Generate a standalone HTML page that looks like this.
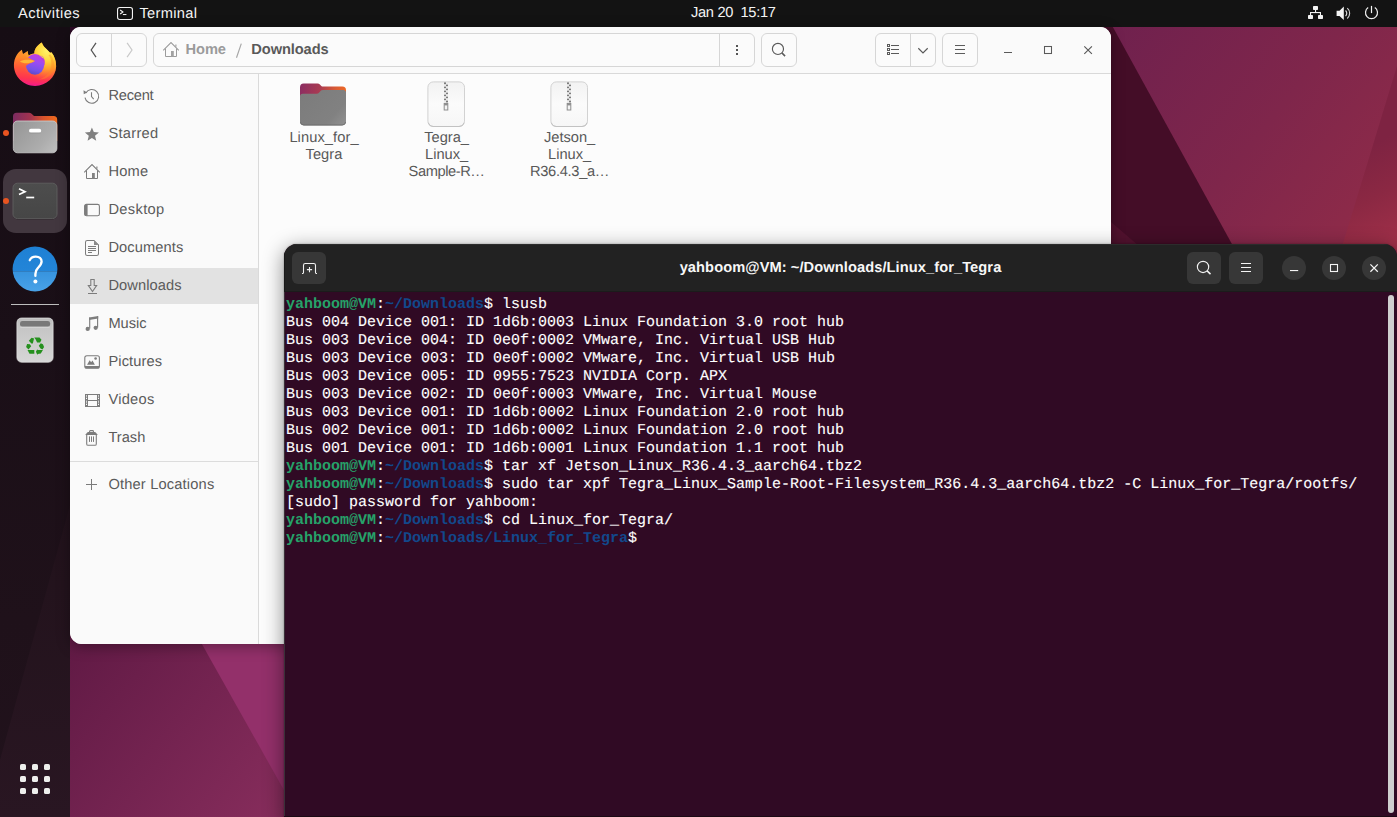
<!DOCTYPE html>
<html>
<head>
<meta charset="utf-8">
<title>Ubuntu Desktop</title>
<style>
*{box-sizing:border-box;margin:0;padding:0}
html,body{text-rendering:geometricPrecision;width:1397px;height:817px;overflow:hidden;background:#6b1f4a;font-family:"Liberation Sans",sans-serif;font-size:14.667px;}
svg{display:block;overflow:visible}
#wall{position:absolute;left:0;top:0;width:1397px;height:817px;}
/* ---------- top bar ---------- */
#topbar{position:absolute;left:0;top:0;width:1397px;height:27px;background:#131313;color:#f4f4f4;}
#topbar .t{position:absolute;top:0;height:27px;line-height:28.8px;white-space:nowrap;}
#topbar svg{position:absolute;}
/* ---------- dock ---------- */
#dock{position:absolute;left:0;top:27px;width:70px;height:790px;background:linear-gradient(180deg,#160d14 0%,#1a0f17 40%,#1f111a 75%,#21121c 100%);}
#dock svg{position:absolute;}
.dot{position:absolute;left:3px;width:6px;height:6px;border-radius:50%;background:#e95420;}
/* ---------- Files window ---------- */
#files{position:absolute;left:70px;top:27px;width:1041px;height:617px;background:#fafafa;border-radius:11px 11px 12px 12px;overflow:hidden;box-shadow:0 3px 14px rgba(0,0,0,.34);}
#fhead{position:absolute;left:0;top:0;width:1041px;height:47px;background:#fafafa;border-bottom:1px solid #d9d9d9;}
#fside{position:absolute;left:0;top:47px;width:189px;height:570px;background:#fafafa;border-right:1px solid #dadada;}
#fmain{position:absolute;left:189px;top:47px;width:852px;height:570px;background:#fcfcfc;}
.btn{position:absolute;top:6px;height:34px;border:1px solid #d6d6d6;border-radius:6px;background:#fbfbfb;}
.btn i{position:absolute;top:0;width:1px;height:32px;background:#d6d6d6;}
#fhead svg{position:absolute;}
.crumb{position:absolute;top:6px;height:34px;line-height:35.8px;font-weight:bold;white-space:nowrap;}
.srow{position:absolute;left:0;width:188px;height:36px;line-height:37.4px;color:#5b5b5b;padding-left:38.4px;white-space:nowrap;}
.srow.sel{background:#e2e2e2;}
.srow svg{position:absolute;left:14px;top:10px;width:16px;height:16px;}
.flabel{position:absolute;width:120px;text-align:center;color:#595959;line-height:17px;white-space:nowrap;}
#fmain svg{position:absolute;}
/* ---------- Terminal window ---------- */
#tshadow{position:absolute;left:284px;top:244px;width:1113px;height:580px;border-radius:13px 13px 0 0;box-shadow:0 5px 20px 1px rgba(0,0,0,.42),0 0 2px rgba(0,0,0,.35);}
#term{position:absolute;left:284px;top:244px;width:1113px;height:573px;background:#300a24;border-radius:13px 13px 0 0;overflow:hidden;}
#thead{position:absolute;left:0;top:0;width:1113px;height:48px;background:#222222;border-left:1px solid #1a1a1a;border-top:1px solid #2c2c2c;border-bottom:1px solid #1b1b1b;}
#ttitle{position:absolute;left:0;top:0;width:1113px;height:47px;line-height:47.2px;text-align:center;padding-right:2px;color:#f7f7f7;font-weight:bold;letter-spacing:.07px;white-space:nowrap;}
.tbtn{position:absolute;top:8px;width:34px;height:32px;background:#373737;border-radius:6px;}
.cbtn{position:absolute;top:12px;width:24px;height:24px;background:#373737;border-radius:50%;}
#thead svg{position:absolute;}
#tbody{position:absolute;left:2px;top:52px;font-family:"Liberation Mono",monospace;font-size:15px;line-height:18px;color:#ffffff;white-space:pre;-webkit-text-stroke:.12px #ffffff;}
.g{color:#26a269;font-weight:bold;-webkit-text-stroke:0 transparent}
.b{color:#12488b;font-weight:bold;-webkit-text-stroke:0 transparent}
#tscroll{position:absolute;left:1104px;top:51px;width:6px;height:518px;border-radius:3px;background:#cfcfcf;}
#tlb{position:absolute;left:0;top:48px;width:1px;height:526px;background:#3a3038;}
#tbot{position:absolute;left:0;top:572px;width:1113px;height:1px;background:#1c0915;}
</style>
</head>
<body>
<svg id="wall" viewBox="0 0 1397 817">
  <defs>
    <linearGradient id="wtr" gradientUnits="userSpaceOnUse" x1="1120" y1="27" x2="1397" y2="244">
      <stop offset="0" stop-color="#70214e"/>
      <stop offset=".5" stop-color="#7f264b"/>
      <stop offset="1" stop-color="#922c48"/>
    </linearGradient>
    <linearGradient id="wtr2" gradientUnits="userSpaceOnUse" x1="1362" y1="150" x2="1405" y2="235">
      <stop offset="0" stop-color="#7e2342"/>
      <stop offset=".5" stop-color="#8b2843"/>
      <stop offset="1" stop-color="#9e2f48"/>
    </linearGradient>
    <linearGradient id="wbl" gradientUnits="userSpaceOnUse" x1="70" y1="643" x2="285" y2="817">
      <stop offset="0" stop-color="#611a45"/>
      <stop offset="1" stop-color="#872d5c"/>
    </linearGradient>
  </defs>
  <rect width="1397" height="817" fill="#5a1840"/>
  <rect x="60" y="20" width="40" height="40" fill="#2c0a25"/>
  <!-- top-right visible region -->
  <rect x="1100" y="20" width="297" height="240" fill="url(#wtr)"/>
  <polygon points="1100,20 1109,20 1233,246 1100,246" fill="#440d27"/>
  <polygon points="1100,222 1111,222 1139,246 1100,246" fill="#52122f"/>
  <polygon points="1397,66 1397,250 1341,250" fill="url(#wtr2)"/>
  <!-- bottom-left visible region -->
  <rect x="60" y="630" width="240" height="187" fill="url(#wbl)"/>
  <polygon points="194,630 300,630 300,817 299,817" fill="#93306a"/>
</svg>

<div id="topbar">
  <div class="t" style="left:18px;letter-spacing:.42px">Activities</div>
  <svg style="left:117px;top:7px" width="16" height="13" viewBox="0 0 16 13"><rect x=".55" y=".55" width="14.9" height="11.9" rx="2.2" fill="none" stroke="#f4f4f4" stroke-width="1.1"/><path d="M3.1,3.1 L6,5 L3.1,6.9" fill="none" stroke="#f0f0f0" stroke-width="1.25" stroke-linejoin="round"/><rect x="5.9" y="7" width="3.5" height="1.05" fill="#f0f0f0"/></svg>
  <div class="t" style="left:139.4px;letter-spacing:.33px">Terminal</div>
  <div class="t" style="left:691px;letter-spacing:-.33px;line-height:27.2px">Jan 20&nbsp; 15:17</div>
  <!-- network -->
  <svg style="left:1308px;top:6px" width="15" height="13" viewBox="0 0 15 13"><g fill="#f3f3f3"><rect x="5" y="0" width="5" height="4" rx=".7"/><rect x="0" y="9" width="5" height="4" rx=".7"/><rect x="10" y="9" width="5" height="4" rx=".7"/><rect x="7" y="3.5" width="1.1" height="3"/><rect x="2" y="6" width="11" height="1.1"/><rect x="2" y="6" width="1.1" height="3.5"/><rect x="11.9" y="6" width="1.1" height="3.5"/></g></svg>
  <!-- speaker -->
  <svg style="left:1336.3px;top:5.6px" width="15.6" height="14.6" viewBox="0 0 16 15"><path d="M0.6 4.8 H3.6 L8 0.6 V14.4 L3.6 10.2 H0.6 Z" fill="#f4f4f4"/><path d="M9.8 4.6 A4 4 0 0 1 9.8 10.4" fill="none" stroke="#dcdcdc" stroke-width="1.2"/><path d="M11.6 2.2 A7 7 0 0 1 11.6 12.8" fill="none" stroke="#d0d0d0" stroke-width="1.2"/></svg>
  <!-- power -->
  <svg style="left:1365px;top:5px" width="14" height="15" viewBox="0 0 14 15"><path d="M3.2,2.6 A6,6 0 1 0 9.8,2.6" fill="none" stroke="#f0f0f0" stroke-width="1.2"/><path d="M6.5,.9 V8.1" stroke="#f4f4f4" stroke-width="1.2"/></svg>
</div>

<div id="dock">
  <svg style="left:0;top:0" width="70" height="790" viewBox="0 0 70 790"><defs><linearGradient id="dkw" x1="0" y1="0" x2="0" y2="1"><stop offset="0" stop-color="#21121b"/><stop offset="1" stop-color="#291622"/></linearGradient></defs><polygon points="70,478 70,790 0,790 0,733" fill="url(#dkw)"/></svg>
  <!-- Firefox : local origin = abs(12,42) => dock(12,15) -->
  <svg style="left:12px;top:15px" width="46" height="46" viewBox="0 0 46 46">
    <defs>
      <linearGradient id="ffb" gradientUnits="userSpaceOnUse" x1="20" y1="4" x2="16" y2="44.5">
        <stop offset="0" stop-color="#ffa726"/>
        <stop offset=".3" stop-color="#ff8a2a"/>
        <stop offset=".55" stop-color="#ff5a38"/>
        <stop offset=".8" stop-color="#ff3450"/>
        <stop offset=".93" stop-color="#f7217a"/>
        <stop offset="1" stop-color="#e3109b"/>
      </linearGradient>
      <radialGradient id="ffy" gradientUnits="userSpaceOnUse" cx="35" cy="9" r="30">
        <stop offset="0" stop-color="#fff36a" stop-opacity="1"/>
        <stop offset=".3" stop-color="#ffdc40" stop-opacity=".98"/>
        <stop offset=".6" stop-color="#ffae2c" stop-opacity=".8"/>
        <stop offset="1" stop-color="#ff7a30" stop-opacity="0"/>
      </radialGradient>
      <linearGradient id="ffg" gradientUnits="userSpaceOnUse" x1="26" y1="12" x2="20" y2="33">
        <stop offset="0" stop-color="#c83ae0"/>
        <stop offset=".4" stop-color="#9a4cf2"/>
        <stop offset=".75" stop-color="#7452e8"/>
        <stop offset="1" stop-color="#5a48c4"/>
      </linearGradient>
      <clipPath id="ffc"><path d="M9.9,7.8 C10.2,9.6 10.5,10.8 11.1,11.9 C12.6,11 14.4,9.8 15.7,9.0 C15.8,10.6 16,12.2 16.6,13.5 C18.6,12.2 20.6,11.6 22.4,11.5 C22.2,7 25.4,3 29.8,0.5 C30.6,3 32,4.6 33.4,6 C35,7.6 36.8,9.2 38.3,11 C38.7,10.6 38.9,10.3 39,9.9 C40.6,11.4 41.6,13.2 42.3,15.2 C43.6,18 44.2,21.4 44.1,25.1 C43.4,35.6 34.4,44 23,43.9 C11.4,44 1.9,34.6 1.9,23 C1.9,19.4 2.9,16 4.6,13.2 C5.8,11.2 7.6,9.2 9.9,7.8 Z"/></clipPath>
    </defs>
    <g clip-path="url(#ffc)">
      <rect width="46" height="46" fill="url(#ffb)"/>
      <rect width="46" height="46" fill="url(#ffy)"/>
      <path d="M36.5,13 C39.5,17 40.4,23 38,28.5 C36,33 32,36 27,37.4 C33.5,38 39.5,33.5 41.6,27.5 C43,22.5 42,17 38.6,12.4 Z" fill="#ff8a22" opacity=".4"/>
    </g>
    <ellipse cx="23" cy="22.3" rx="9.3" ry="10.4" fill="url(#ffg)"/>
    <path d="M27.6,13.4 C30,13.5 31.6,14.9 32.2,16.9 C31,15.9 29.8,15.7 28.4,16 C30.6,17.6 32.2,20.4 32.2,23.4 C33.8,19 32.4,14.6 27.6,13.4 Z" fill="#b93adf"/>
    <g clip-path="url(#ffc)">
      <path d="M12,13 L15.3,15.5 C17.4,16.2 20,17.4 23.1,19.1 C21,20.3 19.4,20.9 17.8,21.5 C16.2,22.1 15.1,22.8 14.4,23.6 C13.7,24.8 13.5,26.2 13.8,27.8 L9,27 L8,15 Z" fill="url(#ffb)"/>
      <path d="M7.9,19.6 C10,17.9 14,17.5 17,17.8 C19.4,18.1 21.4,18.5 22.9,19.1 C20.6,20.3 18.4,20.9 16.4,21.2 C13.4,21.6 10,21.2 7.9,19.6 Z" fill="#ffbe38" opacity=".9"/>
    </g>
  </svg>

  <!-- Files -->
  <div class="dot" style="top:103px"></div>
  <svg style="left:12px;top:84px" width="46" height="44" viewBox="0 0 46 44">
    <defs>
      <linearGradient id="fib" gradientUnits="userSpaceOnUse" x1="2" y1="4" x2="44" y2="10">
        <stop offset="0" stop-color="#7d2c60"/>
        <stop offset=".38" stop-color="#a1334f"/>
        <stop offset=".7" stop-color="#d9542c"/>
        <stop offset="1" stop-color="#ef6a1e"/>
      </linearGradient>
      <linearGradient id="fif" gradientUnits="userSpaceOnUse" x1="4" y1="10" x2="42" y2="42">
        <stop offset="0" stop-color="#969696"/>
        <stop offset=".7" stop-color="#adadad"/>
        <stop offset="1" stop-color="#bdbdbd"/>
      </linearGradient>
    </defs>
    <path d="M1,5.5 Q1,1.8 4.6,1.8 H17 Q18.6,1.8 19.6,2.8 L21.4,4.6 Q22,5.1 23,5.1 H41.6 Q45.2,5.1 45.2,8.6 V30 H1 Z" fill="url(#fib)"/>
    <rect x="1.3" y="10" width="43.6" height="31.8" rx="4.2" fill="url(#fif)" stroke="#cfcfcf" stroke-width=".8"/>
    <rect x="17" y="17.8" width="12.2" height="3.9" rx="1.9" fill="#ffffff"/>
    <path d="M17.6,21.9 H28.6" stroke="#7f7f7f" stroke-width=".7" opacity=".7"/>
  </svg>

  <!-- Terminal (active) -->
  <div style="position:absolute;left:3px;top:142px;width:64px;height:64px;border-radius:13px;background:#42373f"></div>
  <div class="dot" style="top:171px"></div>
  <svg style="left:12px;top:155px" width="46" height="38" viewBox="0 0 46 38">
    <defs><linearGradient id="tig" x1="0" y1="0" x2="0" y2="1"><stop offset="0" stop-color="#4d4d4d"/><stop offset="1" stop-color="#464646"/></linearGradient></defs>
    <rect x="1" y="1.6" width="44" height="35.8" rx="4.5" fill="#2b2228"/><rect x="1" y="1.2" width="44" height="35.4" rx="4.5" fill="url(#tig)" stroke="#606060" stroke-width=".9"/>
    <path d="M7,6.8 L13,9.7 L7,12.6" fill="none" stroke="#ffffff" stroke-width="1.7" stroke-linejoin="miter"/>
    <path d="M14.2,15.5 H22.2" stroke="#ffffff" stroke-width="1.7"/>
  </svg>

  <!-- Help -->
  <svg style="left:12px;top:219px" width="46" height="46" viewBox="0 0 46 46">
    <defs><clipPath id="hc"><circle cx="23" cy="23" r="22.4"/></clipPath>
    <linearGradient id="hg1" x1="0" y1="0" x2="0" y2="1"><stop offset="0" stop-color="#1e80d4"/><stop offset="1" stop-color="#2385d8"/></linearGradient>
    <linearGradient id="hg2" x1="0" y1="0" x2="0" y2="1"><stop offset="0" stop-color="#3693de"/><stop offset="1" stop-color="#4aa3e8"/></linearGradient></defs>
    <g clip-path="url(#hc)"><rect width="46" height="25.2" fill="url(#hg1)"/><rect y="25.2" width="46" height="21" fill="url(#hg2)"/></g>
    <path d="M17.8,14.2 C18.8,11.6 21,10.6 23.8,10.6 C27.2,10.6 29.6,12.6 29.6,15.6 C29.6,18.4 27.8,20 26,21.8 C24.2,23.6 23.4,25.2 23.4,28 V29.8" fill="none" stroke="#ffffff" stroke-width="2.35" stroke-linecap="round"/>
    <circle cx="23.4" cy="35.6" r="2" fill="#ffffff"/>
  </svg>

  <div style="position:absolute;left:11px;top:277px;width:48px;height:1px;background:#bdbdbd"></div>

  <!-- Trash -->
  <svg style="left:16px;top:290px" width="38" height="46" viewBox="0 0 38 46">
    <defs><linearGradient id="trg" x1="0" y1="0" x2="0" y2="1"><stop offset="0" stop-color="#bdbdbd"/><stop offset=".25" stop-color="#c6c6c6"/><stop offset="1" stop-color="#d6d6d6"/></linearGradient></defs>
    <rect x=".9" y="1" width="36.2" height="44.2" rx="4.6" fill="url(#trg)" stroke="#e4e4e4" stroke-width=".7"/>
    <rect x="4" y="3.9" width="30.1" height="5.9" rx="2.4" fill="#787878"/>
    <path d="M4.4,10.2 H33.6" stroke="#e2e2e2" stroke-width=".7"/>
    <g fill="#25901e" transform="translate(19,29)">
      <polygon points="-6.2,-5.3 -3.4,-8.2 -0.9,-7.4 -2.2,-2.4 -3.6,-2.6"/>
      <polygon points="-0.7,-8.4 4.5,-8.4 6.5,-6.2 5.1,-3.4 2.1,-3.4 0.7,-6.5"/>
      <polygon points="5.8,-2.7 7.9,-1.7 9.1,1 7.5,3.4 5.5,2.4 3.8,-0.3"/>
      <polygon points="2.4,3.1 2.4,4.1 7.9,4.1 5.8,7.5 2.7,7.9 2.4,8.9 0.9,5.8"/>
      <polygon points="-7.5,4.1 -0.7,4.1 -0.7,7.8 -5.5,7.8"/>
      <polygon points="-7.9,-2.1 -5.1,-1.7 -3.8,0.3 -5.1,1.7 -6.5,3.4 -8.9,1"/>
    </g>
  </svg>

  <!-- app grid -->
  <svg style="left:20px;top:737px" width="30" height="30" viewBox="0 0 30 30"><g fill="#efefed">
    <rect x="0" y="0" width="6" height="6" rx="1.6"/><rect x="12" y="0" width="6" height="6" rx="1.6"/><rect x="24" y="0" width="6" height="6" rx="1.6"/>
    <rect x="0" y="12" width="6" height="6" rx="1.6"/><rect x="12" y="12" width="6" height="6" rx="1.6"/><rect x="24" y="12" width="6" height="6" rx="1.6"/>
    <rect x="0" y="24" width="6" height="6" rx="1.6"/><rect x="12" y="24" width="6" height="6" rx="1.6"/><rect x="24" y="24" width="6" height="6" rx="1.6"/>
  </g></svg>
</div>

<div id="files">
  <div id="fhead">
    <!-- nav -->
    <div class="btn" style="left:6px;width:71px"><i style="left:34px"></i></div>
    <svg style="left:20px;top:15px" width="7" height="16" viewBox="0 0 7 16"><path d="M6,.8 L1.2,8 L6,15.2" fill="none" stroke="#555555" stroke-width="1.25"/></svg>
    <svg style="left:56px;top:15px" width="7" height="16" viewBox="0 0 7 16"><path d="M1.1,.8 L6,8 L1.1,15.2" fill="none" stroke="#c9c9c9" stroke-width="1.2"/></svg>
    <!-- path bar -->
    <div class="btn" style="left:83px;width:602px"><i style="left:564.7px"></i></div>
    <svg style="left:93px;top:15px" width="16" height="15" viewBox="0 0 16 15"><path d="M.2,8.4 L8,.6 L15.8,8.4" fill="none" stroke="#9c9c9c" stroke-width="1.05"/><path d="M2.5,6.4 V14.5 H13.5 V6.4" fill="none" stroke="#9c9c9c" stroke-width="1"/><rect x="8" y="9" width="2.8" height="5.5" fill="#a2a2a2"/><path d="M12.9,2.6 V4.8" stroke="#9c9c9c" stroke-width="1.1"/></svg>
    <div class="crumb" style="left:115.6px;color:#9b9b9b;letter-spacing:-.1px">Home</div>
    <svg style="left:166px;top:16px" width="6" height="16" viewBox="0 0 6 16"><path d="M5.3,.6 L.5,14.8" stroke="#a6a6a6" stroke-width="1.15"/></svg>
    <div class="crumb" style="left:181.3px;color:#595959;letter-spacing:-.1px">Downloads</div>
    <svg style="left:666px;top:18px" width="2" height="10" viewBox="0 0 2 10"><g fill="#555555"><rect x="0" y="0" width="2" height="2"/><rect x="0" y="4" width="2" height="2"/><rect x="0" y="8" width="2" height="2"/></g></svg>
    <!-- search -->
    <div class="btn" style="left:691px;width:36px"></div>
    <svg style="left:701px;top:15px" width="16" height="16" viewBox="0 0 16 16"><circle cx="6.95" cy="6.95" r="5.55" fill="none" stroke="#5a5a5a" stroke-width="1.15"/><path d="M10.9,10.9 L14.1,14.1" stroke="#5a5a5a" stroke-width="1.5"/></svg>
    <!-- view -->
    <div class="btn" style="left:805px;width:61px"><i style="left:34px"></i></div>
    <svg style="left:817px;top:17px" width="12" height="11" viewBox="0 0 12 11"><g fill="none" stroke="#5a5a5a" stroke-width="1"><rect x=".5" y=".5" width="2" height="2"/><rect x=".5" y="4.5" width="2" height="2"/><rect x=".5" y="8.5" width="2" height="2"/></g><g fill="#5a5a5a"><rect x="4" y="1" width="8" height="1"/><rect x="4" y="5" width="8" height="1"/><rect x="4" y="9" width="8" height="1"/></g></svg>
    <svg style="left:848px;top:21px" width="10" height="6" viewBox="0 0 10 6"><path d="M.3,.3 L5,4.9 L9.7,.3" fill="none" stroke="#5a5a5a" stroke-width="1.2"/></svg>
    <!-- menu -->
    <div class="btn" style="left:872px;width:36px"></div>
    <svg style="left:885px;top:18px" width="10" height="9" viewBox="0 0 10 9"><g fill="#5c5c5c"><rect x="0" y="0" width="10" height="1"/><rect x="0" y="4" width="10" height="1"/><rect x="0" y="8" width="10" height="1"/></g></svg>
    <!-- window controls -->
    <svg style="left:934px;top:25px" width="8" height="1" viewBox="0 0 8 1"><rect x="0" y="0" width="8" height="1" fill="#5a5a5a"/></svg>
    <svg style="left:974px;top:19px" width="8" height="8" viewBox="0 0 8 8"><rect x=".5" y=".5" width="7" height="7" fill="none" stroke="#5a5a5a" stroke-width="1.05"/></svg>
    <svg style="left:1014px;top:19px" width="8" height="8" viewBox="0 0 8 8"><path d="M.3,.3 L7.9,7.9 M7.9,.3 L.3,7.9" stroke="#5a5a5a" stroke-width="1.15"/></svg>
  </div>

  <div id="fside">
    <div class="srow" style="top:4px;letter-spacing:-.24px"><svg viewBox="0.5 0 16 16"><path d="M2.3,4.9 A6.9,6.9 0 1 1 1.5,9.6" fill="none" stroke="#7c7c7c" stroke-width="1.1"/><path d="M0,2.2 L3.7,4.6 L.3,6.2 Z" fill="#7c7c7c"/><path d="M8,4.2 V8.6 L10.2,11.2" fill="none" stroke="#7c7c7c" stroke-width="1.1"/></svg>Recent</div>
    <div class="srow" style="top:42px;letter-spacing:.28px"><svg viewBox="0 0 16 16"><path transform="translate(7.9,8.2) scale(.92) translate(-8,-8.2)" d="M8,.8 L10.1,5.9 L15.6,6.3 L11.4,9.9 L12.7,15.2 L8,12.3 L3.3,15.2 L4.6,9.9 L.4,6.3 L5.9,5.9 Z" fill="#808080"/></svg>Starred</div>
    <div class="srow" style="top:80px;letter-spacing:.2px"><svg viewBox="0 0 16 16"><path d="M.2,8.4 L8,.6 L15.8,8.4" fill="none" stroke="#7c7c7c" stroke-width="1.05"/><path d="M2.5,6.4 V14.5 H13.5 V6.4" fill="none" stroke="#7c7c7c" stroke-width="1"/><rect x="8" y="9" width="2.8" height="5.5" fill="#828282"/><path d="M12.9,2.6 V4.8" stroke="#7c7c7c" stroke-width="1.1"/></svg>Home</div>
    <div class="srow" style="top:118px;letter-spacing:.35px"><svg viewBox="0 0 16 16"><rect x=".6" y="2.4" width="14.8" height="11.4" rx="1.8" fill="none" stroke="#7c7c7c" stroke-width="1.1"/><path d="M.6,4 Q.6,2.4 2.4,2.4 H3.6 V13.8 H2.4 Q.6,13.8 .6,12.2 Z" fill="#7c7c7c"/></svg>Desktop</div>
    <div class="srow" style="top:156px;letter-spacing:.1px"><svg viewBox="0 0 16 16"><path d="M1.5,2.3 Q1.5,.5 3.3,.5 H10 L14.5,5 V13.7 Q14.5,15.5 12.7,15.5 H3.3 Q1.5,15.5 1.5,13.7 Z" fill="none" stroke="#7c7c7c" stroke-width="1.05"/><path d="M10,.5 L14.5,5 H10 Z" fill="#8a8a8a"/><path d="M4,6.5 H12 M4,8.5 H12 M4,10.5 H12 M4,12.5 H8" stroke="#7c7c7c" stroke-width="1"/></svg>Documents</div>
    <div class="srow sel" style="top:194px;letter-spacing:.1px"><svg viewBox="0 0 16 16"><path d="M6.8,1.5 H10.2 V7.4 H12.7 L8.5,13.5 L4.3,7.4 H6.8 Z" fill="none" stroke="#7c7c7c" stroke-width="1.05" stroke-linejoin="miter"/><path d="M4,15.5 H13" stroke="#7c7c7c" stroke-width="1.05"/></svg>Downloads</div>
    <div class="srow" style="top:232px"><svg viewBox="0 0 16 16"><path d="M5.1,1.5 L14.2,0 V2.6 L5.1,4.1 Z" fill="#7e7e7e"/><path d="M5.7,1.6 V12.6 M13.6,.3 V11.5" stroke="#7e7e7e" stroke-width="1.15"/><circle cx="3.7" cy="12.9" r="2.15" fill="#7e7e7e"/><circle cx="11.7" cy="11.8" r="2.15" fill="#7e7e7e"/></svg>Music</div>
    <div class="srow" style="top:270px;letter-spacing:.12px"><svg viewBox="0 0 16 16"><rect x=".8" y="1.7" width="14.6" height="12.5" rx="2" fill="none" stroke="#7c7c7c" stroke-width="1.1"/><path d="M.8,12.1 H15.4 V12.4 Q15.4,14.2 13.6,14.2 H2.6 Q.8,14.2 .8,12.4 Z" fill="#7c7c7c"/><path d="M3,10.8 L5.7,6.2 L7.1,8.2 L8.5,6.6 L10.9,10.8 Z" fill="#7c7c7c"/><circle cx="11.6" cy="4.5" r="1.3" fill="#7c7c7c"/></svg>Pictures</div>
    <div class="srow" style="top:308px;letter-spacing:.27px"><svg viewBox="0 0 16 16"><rect x="1" y="2" width="3" height="13" fill="#7c7c7c"/><rect x="13" y="2" width="3" height="13" fill="#7c7c7c"/><g fill="#fafafa"><rect x="2" y="3.3" width="1" height="1.3"/><rect x="14" y="3.3" width="1" height="1.3"/><rect x="2" y="5.7" width="1" height="1.3"/><rect x="14" y="5.7" width="1" height="1.3"/><rect x="2" y="9.3" width="1" height="1.3"/><rect x="14" y="9.3" width="1" height="1.3"/><rect x="2" y="11.7" width="1" height="1.3"/><rect x="14" y="11.7" width="1" height="1.3"/><rect x="2" y="7.9" width="1" height=".7" opacity=".5"/><rect x="14" y="7.9" width="1" height=".7" opacity=".5"/></g><path d="M4,2.5 H13 M4,8.5 H13 M4,14.5 H13" stroke="#7c7c7c" stroke-width="1"/></svg>Videos</div>
    <div class="srow" style="top:346px"><svg viewBox="0 0 16 16"><path d="M5.6,2.4 V1.3 Q5.6,.6 6.3,.6 H8.7 Q9.4,.6 9.4,1.3 V2.4" fill="none" stroke="#7c7c7c" stroke-width="1.1"/><path d="M1.2,4.9 L3.2,2.4 Q3.6,2 4.2,2 H10.8 Q11.4,2 11.8,2.4 L13.8,4.9 Z" fill="#7c7c7c"/><path d="M2.7,4.9 V13.9 Q2.7,15.3 4.1,15.3 H10.9 Q12.3,15.3 12.3,13.9 V4.9" fill="none" stroke="#7c7c7c" stroke-width="1.1"/><path d="M5.5,6.4 V11.9 M7.5,6.4 V11.9 M9.5,6.4 V11.9" stroke="#7c7c7c" stroke-width="1"/></svg>Trash</div>
    <div style="position:absolute;left:0;top:387px;width:188px;height:1px;background:#dcdcdc"></div>
    <div class="srow" style="top:393px;letter-spacing:.17px"><svg viewBox="0 0 16 16"><path d="M7.5,2 V13 M2,7.5 H13" stroke="#7a7a7a" stroke-width="1"/></svg>Other Locations</div>
  </div>

  <div id="fmain">
    <!-- folder -->
    <svg style="left:41px;top:8.5px" width="46" height="43" viewBox="0 0 46 43">
      <defs>
        <linearGradient id="fob" gradientUnits="userSpaceOnUse" x1="0" y1="2" x2="46" y2="10">
          <stop offset="0" stop-color="#8b2d62"/><stop offset=".42" stop-color="#a83a52"/><stop offset=".75" stop-color="#d85a36"/><stop offset="1" stop-color="#ee6a24"/>
        </linearGradient>
        <linearGradient id="fof" gradientUnits="userSpaceOnUse" x1="4" y1="8" x2="42" y2="42">
          <stop offset="0" stop-color="#7c7c7c"/><stop offset=".75" stop-color="#818181"/><stop offset="1" stop-color="#8e8e8e"/>
        </linearGradient>
      </defs>
      <path d="M0,4.4 Q0,.6 3.6,.6 H17.6 Q19,.6 19.9,1.5 L21.3,2.9 Q21.9,3.5 23,3.5 H42.4 Q46,3.5 46,7.2 V30 H0 Z" fill="url(#fob)"/>
      <path d="M0,13.4 Q0,10.8 2.8,10.8 H16.6 Q18.2,10.8 19.2,9.6 L20.6,8 Q21.4,7 23,7 H43.2 Q46,7 46,9.8 V38.6 Q46,42.4 42.2,42.4 H3.8 Q0,42.4 0,38.6 Z" fill="url(#fof)"/>
      <path d="M.4,39 Q.6,42 3.8,42 H42.2 Q45.4,42 45.6,39" fill="none" stroke="#6a6a6a" stroke-width=".8"/>
    </svg>
    <div class="flabel" style="left:5px;top:55.6px;letter-spacing:.08px">Linux_for_<br>Tegra</div>

    <!-- zip 1 -->
    <svg style="left:168px;top:6.5px" width="38" height="47" viewBox="0 0 38 47">
      <defs><linearGradient id="zg" x1="0" y1="0" x2="0" y2="1"><stop offset="0" stop-color="#f2f2f2"/><stop offset=".5" stop-color="#fbfbfb"/><stop offset="1" stop-color="#f6f6f6"/></linearGradient></defs>
      <rect x=".9" y=".9" width="36.6" height="44.6" rx="5.4" fill="url(#zg)" stroke="#d2d2d2" stroke-width="1"/>
      <path d="M1.4,41.8 Q2,45.4 6,45.5 H32 Q36.4,45.4 37,41.8" fill="none" stroke="#c2c2c2" stroke-width="1"/>
      <g fill="#7c7c7c"><rect x="17" y="1.4" width="2" height="2"/><rect x="19" y="3.4" width="2" height="2"/><rect x="17" y="5.4" width="2" height="2"/><rect x="19" y="7.4" width="2" height="2"/><rect x="17" y="9.4" width="2" height="2"/><rect x="19" y="11.4" width="2" height="2"/><rect x="17" y="13.4" width="2" height="2"/><rect x="19" y="15.4" width="2" height="2"/><rect x="17" y="17.4" width="2" height="2"/><rect x="19" y="19.4" width="2" height="2"/></g>
      <g fill="#ebebeb"><rect x="19" y="1.4" width="2" height="2"/><rect x="17" y="3.4" width="2" height="2"/><rect x="19" y="5.4" width="2" height="2"/><rect x="17" y="7.4" width="2" height="2"/><rect x="19" y="9.4" width="2" height="2"/><rect x="17" y="11.4" width="2" height="2"/><rect x="19" y="13.4" width="2" height="2"/><rect x="17" y="15.4" width="2" height="2"/><rect x="19" y="17.4" width="2" height="2"/><rect x="17" y="19.4" width="2" height="2"/></g>
      <rect x="17.2" y="22.4" width="3.6" height="6.6" fill="#f4f4f4" stroke="#8d8d8d" stroke-width="1"/><rect x="17.2" y="22.4" width="3.6" height="2" fill="#8d8d8d"/>
    </svg>
    <div class="flabel" style="left:127.6px;top:55.6px">Tegra_<br>Linux_<br><span style="letter-spacing:-.42px">Sample-R…</span></div>

    <!-- zip 2 -->
    <svg style="left:291px;top:6.5px" width="38" height="47" viewBox="0 0 38 47">
      <rect x=".9" y=".9" width="36.6" height="44.6" rx="5.4" fill="url(#zg)" stroke="#d2d2d2" stroke-width="1"/>
      <path d="M1.4,41.8 Q2,45.4 6,45.5 H32 Q36.4,45.4 37,41.8" fill="none" stroke="#c2c2c2" stroke-width="1"/>
      <g fill="#7c7c7c"><rect x="17" y="1.4" width="2" height="2"/><rect x="19" y="3.4" width="2" height="2"/><rect x="17" y="5.4" width="2" height="2"/><rect x="19" y="7.4" width="2" height="2"/><rect x="17" y="9.4" width="2" height="2"/><rect x="19" y="11.4" width="2" height="2"/><rect x="17" y="13.4" width="2" height="2"/><rect x="19" y="15.4" width="2" height="2"/><rect x="17" y="17.4" width="2" height="2"/><rect x="19" y="19.4" width="2" height="2"/></g>
      <g fill="#ebebeb"><rect x="19" y="1.4" width="2" height="2"/><rect x="17" y="3.4" width="2" height="2"/><rect x="19" y="5.4" width="2" height="2"/><rect x="17" y="7.4" width="2" height="2"/><rect x="19" y="9.4" width="2" height="2"/><rect x="17" y="11.4" width="2" height="2"/><rect x="19" y="13.4" width="2" height="2"/><rect x="17" y="15.4" width="2" height="2"/><rect x="19" y="17.4" width="2" height="2"/><rect x="17" y="19.4" width="2" height="2"/></g>
      <rect x="17.2" y="22.4" width="3.6" height="6.6" fill="#f4f4f4" stroke="#8d8d8d" stroke-width="1"/><rect x="17.2" y="22.4" width="3.6" height="2" fill="#8d8d8d"/>
    </svg>
    <div class="flabel" style="left:250.6px;top:55.6px">Jetson_<br>Linux_<br><span style="letter-spacing:-.3px">R36.4.3_a…</span></div>
  </div>
</div>

<div id="tshadow"></div>
<div id="term">
  <div id="thead">
    <div id="ttitle">yahboom@VM: ~/Downloads/Linux_for_Tegra</div>
    <!-- new tab -->
    <div class="tbtn" style="left:7px;top:7px"></div>
    <svg style="left:17px;top:18px" width="16" height="12" viewBox="0 0 16 12"><path d="M0,10.5 H.8 Q1.5,10.5 1.5,9.6 V2.3 Q1.5,.5 3.3,.5 H11.7 Q13.5,.5 13.5,2.3 V9.6 Q13.5,10.5 14.2,10.5 H15" fill="none" stroke="#f2f2f2" stroke-width="1.1"/><path d="M7.5,4 V9.2 M4.9,6.6 H10.1" stroke="#f2f2f2" stroke-width="1.1"/></svg>
    <!-- search -->
    <div class="tbtn" style="left:902px;top:7px"></div>
    <svg style="left:911px;top:15px" width="16" height="16" viewBox="0 0 16 16"><circle cx="7.05" cy="6.95" r="5.65" fill="none" stroke="#f2f2f2" stroke-width="1.15"/><path d="M11.1,10.9 L14.5,14.1" stroke="#f2f2f2" stroke-width="1.5"/></svg>
    <!-- menu -->
    <div class="tbtn" style="left:944px;top:7px"></div>
    <svg style="left:956px;top:18px" width="10" height="9" viewBox="0 0 10 9"><g fill="#f4f4f4"><rect x="0" y="0" width="10" height="1"/><rect x="0" y="4" width="10" height="1"/><rect x="0" y="8" width="10" height="1"/></g></svg>
    <!-- controls -->
    <div class="cbtn" style="left:997px;top:11px"></div>
    <svg style="left:1005px;top:25px" width="9" height="2" viewBox="0 0 9 2"><rect x="0" y="0" width="8.2" height="1.1" fill="#f5f5f5"/></svg>
    <div class="cbtn" style="left:1037px;top:11px"></div>
    <svg style="left:1045px;top:19px" width="9" height="9" viewBox="0 0 9 9"><rect x=".5" y=".5" width="7" height="7" fill="none" stroke="#f5f5f5" stroke-width="1.1"/></svg>
    <div class="cbtn" style="left:1077px;top:11px"></div>
    <svg style="left:1085px;top:19px" width="9" height="9" viewBox="0 0 9 9"><path d="M.4,.4 L7.8,7.8 M7.8,.4 L.4,7.8" stroke="#f5f5f5" stroke-width="1.25"/></svg>
  </div>
  <div id="tbody"><span class="g">yahboom@VM</span>:<span class="b">~/Downloads</span>$ lsusb
Bus 004 Device 001: ID 1d6b:0003 Linux Foundation 3.0 root hub
Bus 003 Device 004: ID 0e0f:0002 VMware, Inc. Virtual USB Hub
Bus 003 Device 003: ID 0e0f:0002 VMware, Inc. Virtual USB Hub
Bus 003 Device 005: ID 0955:7523 NVIDIA Corp. APX
Bus 003 Device 002: ID 0e0f:0003 VMware, Inc. Virtual Mouse
Bus 003 Device 001: ID 1d6b:0002 Linux Foundation 2.0 root hub
Bus 002 Device 001: ID 1d6b:0002 Linux Foundation 2.0 root hub
Bus 001 Device 001: ID 1d6b:0001 Linux Foundation 1.1 root hub
<span class="g">yahboom@VM</span>:<span class="b">~/Downloads</span>$ tar xf Jetson_Linux_R36.4.3_aarch64.tbz2
<span class="g">yahboom@VM</span>:<span class="b">~/Downloads</span>$ sudo tar xpf Tegra_Linux_Sample-Root-Filesystem_R36.4.3_aarch64.tbz2 -C Linux_for_Tegra/rootfs/
[sudo] password for yahboom: 
<span class="g">yahboom@VM</span>:<span class="b">~/Downloads</span>$ cd Linux_for_Tegra/
<span class="g">yahboom@VM</span>:<span class="b">~/Downloads/Linux_for_Tegra</span>$ </div>
  <div id="tlb"></div>
  <div id="tscroll"></div>
  <div id="tbot"></div>
</div>

</body>
</html>
